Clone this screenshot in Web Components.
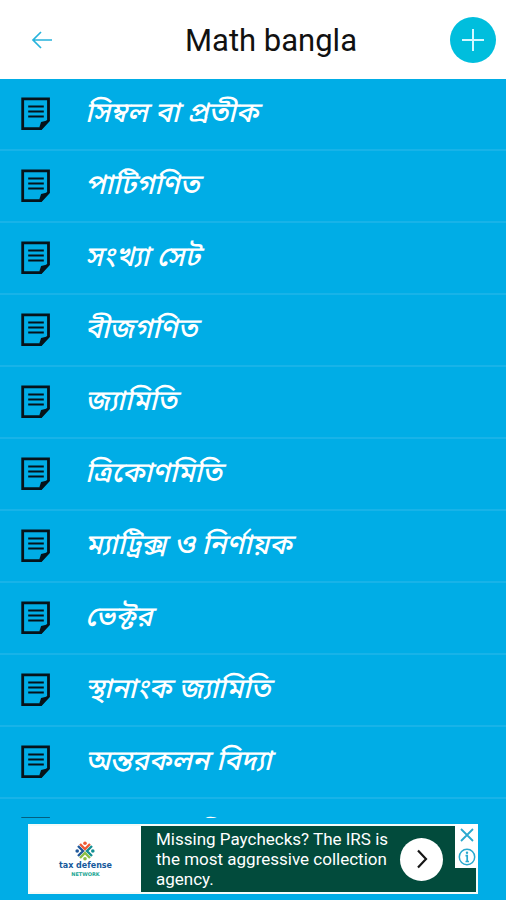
<!DOCTYPE html>
<html lang="bn">
<head>
<meta charset="utf-8">
<meta name="viewport" content="width=device-width, initial-scale=1">
<title>Math bangla</title>
<style>
  html, body { margin: 0; height: 100%; }
  body { background: #00ade6; font-family: Roboto, "Noto Sans", sans-serif; }
</style>
</head>
<body>
<math-app>
  <app-bar slot="bar">Math bangla</app-bar>
  <topic-row>সিম্বল বা প্রতীক</topic-row>
  <topic-row>পাটিগণিত</topic-row>
  <topic-row>সংখ্যা সেট</topic-row>
  <topic-row>বীজগণিত</topic-row>
  <topic-row>জ্যামিতি</topic-row>
  <topic-row>ত্রিকোণমিতি</topic-row>
  <topic-row>ম্যাট্রিক্স ও নির্ণায়ক</topic-row>
  <topic-row>ভেক্টর</topic-row>
  <topic-row>স্থানাংক জ্যামিতি</topic-row>
  <topic-row>অন্তরকলন বিদ্যা</topic-row>
  <topic-row>সমাকলন বিদ্যা</topic-row>
  <ad-banner slot="ad">
    <ad-logo slot="logo"></ad-logo>
    Missing Paychecks? The IRS is the most aggressive collection agency.
  </ad-banner>
</math-app>

<script>
(() => {
  const define = (name, html) => {
    customElements.define(name, class extends HTMLElement {
      constructor() {
        super();
        this.attachShadow({ mode: "open" }).innerHTML = html;
      }
    });
  };

  // page shell: bar on top, scrolling list, ad pinned below it
  define("math-app", `
    <style>
      :host { display: flex; flex-direction: column; height: 100vh; background: #00ade6; }
      main {
        flex: 1; min-height: 0; overflow-y: auto; scrollbar-width: none;
      }
      footer { padding: 6px 28px; }
    </style>
    <slot name="bar"></slot>
    <main><slot></slot></main>
    <footer><slot name="ad"></slot></footer>
  `);

  define("app-bar", `
    <style>
      :host { display: block; background: #fff; color: #111; }
      header { display: flex; align-items: center; height: 79px; }
      h1 {
        flex: 1; margin: 0; padding: 2px 0 0 8px;
        font-size: 31px; font-weight: 400; line-height: 40px; text-align: center;
      }
      button {
        display: flex; align-items: center; justify-content: center;
        border: 0; padding: 0; background: none; cursor: pointer;
      }
      .back { width: 84px; height: 48px; }
      .add {
        width: 46px; height: 46px; margin-right: 10px;
        border-radius: 50%; background: #00bedd;
      }
      svg { fill: none; }
    </style>
    <header>
      <button class="back" type="button" aria-label="Back">
        <svg width="22" height="20" viewBox="0 0 22 20" stroke="#27b3dc" stroke-width="1.7"><path d="M21 10H2M10 2L2 10l8 8"/></svg>
      </button>
      <h1><slot></slot></h1>
      <button class="add" type="button" aria-label="Add">
        <svg width="22" height="22" viewBox="0 0 22 22" stroke="#d4f8ff" stroke-width="2"><path d="M11 0v22M0 11h22"/></svg>
      </button>
    </header>
  `);

  define("topic-row", `
    <style>
      :host { display: block; border-bottom: 2px solid #18b3e8; }
      a {
        display: flex; align-items: center; gap: 34px;
        height: 70px; padding: 0 20px; color: #fff; text-decoration: none;
      }
      svg { flex: none; }
      span {
        padding-top: 2px;
        font: italic 500 28px/40px "Noto Sans Bengali", "Noto Sans", sans-serif;
        white-space: nowrap;
      }
    </style>
    <a href="#">
      <svg width="31" height="34" viewBox="0 0 31 34" aria-hidden="true">
        <path d="M2.7 1.9h25.8v21.6l-7.6 8.2H2.7z" fill="none" stroke="#06131a" stroke-width="2.8"/>
        <path d="M29.4 23l-8.3 10h-1.5v-3.5l1.5-4.5 4-1z" fill="#06131a"/>
        <path d="M8.2 9.5h15.6M8.2 14.5h15.6M8.2 19.5h15.6" stroke="#06131a" stroke-width="2.2"/>
      </svg>
      <span><slot></slot></span>
    </a>
  `);

  define("ad-logo", `
    <style>
      :host {
        display: flex; flex-direction: column; align-items: center;
        font-family: "DejaVu Sans", sans-serif; font-weight: 700;
      }
      b { font-size: 8px; line-height: 10px; color: #17599b; }
      small { font-size: 5px; line-height: 6px; color: #19a693; }
    </style>
    <svg width="20" height="20" viewBox="0 0 20 20" fill="none" stroke-width="2.4" aria-hidden="true">
      <path d="M5 3l5 5 5-5" stroke="#ee5a35"/><circle cx="10" cy="2.2" r="1.8" fill="#ee5a35"/>
      <path d="M3 5l5 5-5 5" stroke="#20599b"/><circle cx="2.2" cy="10" r="1.8" fill="#20599b"/>
      <path d="M17 5l-5 5 5 5" stroke="#128f93"/><circle cx="17.8" cy="10" r="1.8" fill="#128f93"/>
      <path d="M5 17l5-5 5 5" stroke="#8cbf45"/><circle cx="10" cy="17.8" r="1.8" fill="#8cbf45"/>
    </svg>
    <b>tax defense</b>
    <small>NETWORK</small>
  `);

  define("ad-banner", `
    <style>
      :host { display: block; position: relative; color: #fff; }
      .ad {
        display: flex; align-items: stretch; min-height: 66px;
        border: 2px solid #f4fbf8; background: #024b3c;
      }
      .logo {
        flex: none; width: 111px; background: #fff;
        display: flex; align-items: center; justify-content: center;
      }
      p {
        flex: 1; margin: 0; padding: 3px 0 3px 15px;
        font-size: 17px; font-weight: 400; line-height: 20px;
      }
      button { border: 0; padding: 0; cursor: pointer; }
      .go {
        flex: none; align-self: center; width: 43px; height: 43px; margin: 0 33px 0 4px;
        display: flex; align-items: center; justify-content: center;
        border-radius: 50%; background: #fff;
      }
      .choices {
        position: absolute; top: 0; right: 0;
        display: flex; flex-direction: column; background: #fff;
      }
      .choices button { width: 23px; height: 22px; background: none; }
      svg { display: block; margin: auto; fill: none; }
    </style>
    <div class="ad">
      <div class="logo"><slot name="logo"></slot></div>
      <p><slot></slot></p>
      <button class="go" type="button" aria-label="Open">
        <svg width="12" height="20" viewBox="0 0 12 20" stroke="#161616" stroke-width="2.2"><path d="M2 1.5L10 10l-8 8.5"/></svg>
      </button>
    </div>
    <div class="choices">
      <button type="button" aria-label="Close ad">
        <svg width="14" height="14" viewBox="0 0 14 14" stroke="#29a9cf" stroke-width="1.8"><path d="M1 1l12 12M13 1L1 13"/></svg>
      </button>
      <button type="button" aria-label="Ad info">
        <svg width="18" height="18" viewBox="0 0 18 18" stroke="#29a9cf"><circle cx="9" cy="9" r="7.7" stroke-width="1.5"/><path d="M7.5 7.7h1.7V14M7.5 13.5h3.5" stroke-width="1.7"/><circle cx="9" cy="4.8" r="1.2" fill="#29a9cf" stroke="none"/></svg>
      </button>
    </div>
  `);
})();
</script>
</body>
</html>
